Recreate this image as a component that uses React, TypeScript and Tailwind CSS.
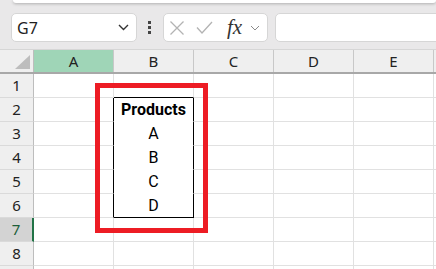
import React from "react";

const COLS = ["A", "B", "C", "D", "E", "F"];
const ROWS = [1, 2, 3, 4, 5, 6, 7, 8, 9];

const cellText: Record<string, { t: string; bold?: boolean }> = {
  B2: { t: "Products", bold: true },
  B3: { t: "A" },
  B4: { t: "B" },
  B5: { t: "C" },
  B6: { t: "D" },
};

function cellBorders(col: string, row: number): string {
  let right = "border-r-[#e1e1e1]";
  let bottom = "border-b-[#e1e1e1]";
  if (col === "A" && row >= 2 && row <= 6) right = "border-r-black";
  if (col === "B" && row >= 2 && row <= 6) right = "border-r-black";
  if (col === "B" && row === 1) bottom = "border-b-black";
  if (col === "B" && row >= 2 && row <= 5) bottom = "border-b-white";
  if (col === "B" && row === 6) bottom = "border-b-black";
  return `${right} ${bottom}`;
}

export default function App() {
  return (
    <div className="relative w-[436px] h-[269px] overflow-hidden bg-white" style={{ fontFamily: '"Noto Sans", sans-serif' }}>
      {/* Formula bar area */}
      <div className="h-[50px] bg-[#e9e8e9] border-b border-b-[#d6d6d6] overflow-hidden">
        <div className="ml-[13px] h-[3px] bg-white rounded-b-[4px] shadow-[0_1px_3px_rgba(0,0,0,0.25)]" />
        <div className="mt-[10px] h-[29px] flex items-stretch pl-[11px]">
          {/* name box */}
          <div className="w-[126px] shrink-0 bg-white border border-[#d6d6d6] rounded-[5px] flex items-center justify-between pl-[5px] pr-[7px]">
            <span className="text-[16px] leading-none text-[#1f1f1f]">G7</span>
            <svg width="11" height="7" viewBox="0 0 11 7" fill="none">
              <path d="M1 1l4.5 4.5L10 1" stroke="#333" strokeWidth="1.4" />
            </svg>
          </div>
          {/* dots */}
          <div className="ml-[11px] w-[3px] shrink-0 flex flex-col items-center justify-center gap-[2px]">
            <div className="w-[3px] h-[3px] bg-[#444]" />
            <div className="w-[3px] h-[3px] bg-[#444]" />
            <div className="w-[3px] h-[3px] bg-[#444]" />
          </div>
          {/* fx box */}
          <div className="ml-[12px] w-[105px] shrink-0 bg-white border border-[#d6d6d6] rounded-[5px] flex items-center pl-[5px]">
            <svg className="shrink-0" width="16" height="16" viewBox="0 0 16 16" fill="none">
              <path d="M1.5 1.5l13 13M14.5 1.5l-13 13" stroke="#b3b3b3" strokeWidth="1.3" />
            </svg>
            <svg className="ml-[11px] shrink-0" width="17" height="13" viewBox="0 0 17 13" fill="none">
              <path d="M1 6.5l5 5.5L16 1" stroke="#b3b3b3" strokeWidth="1.3" />
            </svg>
            <span
              className="ml-[14px] text-[21px] leading-none text-[#333] italic"
              style={{ fontFamily: '"Liberation Serif", serif' }}
            >
              fx
            </span>
            <svg className="ml-[8px] shrink-0" width="10" height="6" viewBox="0 0 10 6" fill="none">
              <path d="M1 1l4 4 4-4" stroke="#8a8a8a" strokeWidth="1" />
            </svg>
          </div>
          {/* formula input */}
          <div className="ml-[7px] w-[175px] shrink-0 bg-white border border-[#d6d6d6] rounded-[5px]" />
        </div>
      </div>

      {/* Grid */}
      <div className="flex flex-col">
        {/* header row */}
        <div className="flex h-[24px] bg-[#efefef] border-b-2 border-b-[#a8a8a8]">
          <div className="w-[34px] shrink-0 border-r border-r-[#bdbdbd] flex items-end justify-end pr-[3px] pb-[3px]">
            <svg width="15" height="14" viewBox="0 0 15 14">
              <polygon points="15,0 15,14 0,14" fill="#bdbdbd" />
            </svg>
          </div>
          {COLS.map((c) => (
            <div
              key={c}
              className={`w-[80px] shrink-0 border-r border-r-[#c8c8c8] flex items-center justify-center text-[15px] text-[#222] ${
                c === "A" ? "bg-[#9fd5b7]" : ""
              }`}
            >
              {c === "F" ? "" : c}
            </div>
          ))}
        </div>
        {ROWS.map((r) => (
          <div key={r} className="flex h-[24px]">
            <div
              className={`w-[34px] shrink-0 flex items-center justify-center text-[15px] border-b border-b-[#dadada] ${
                r === 7
                  ? "bg-[#d3d3d3] text-[#1d5e3a] border-r-2 border-r-[#217346]"
                  : "bg-[#efefef] text-[#222] border-r border-r-[#bdbdbd]"
              }`}
            >
              {r === 9 ? "" : r}
            </div>
            {COLS.map((c) => {
              const key = `${c}${r}`;
              const cell = cellText[key];
              return (
                <div
                  key={key}
                  className={`w-[80px] shrink-0 border-r border-b flex items-center justify-center text-[16px] text-black ${cellBorders(
                    c,
                    r
                  )} ${cell?.bold ? "font-bold" : ""}`}
                  style={{ fontFamily: 'Roboto, "Liberation Sans", sans-serif' }}
                >
                  {cell?.t ?? ""}
                </div>
              );
            })}
          </div>
        ))}
      </div>

      {/* Red highlight annotation */}
      <div className="absolute left-[95px] top-[83px] w-[113px] h-[150px] border-[5px] border-[#ed1c24]" />
    </div>
  );
}
